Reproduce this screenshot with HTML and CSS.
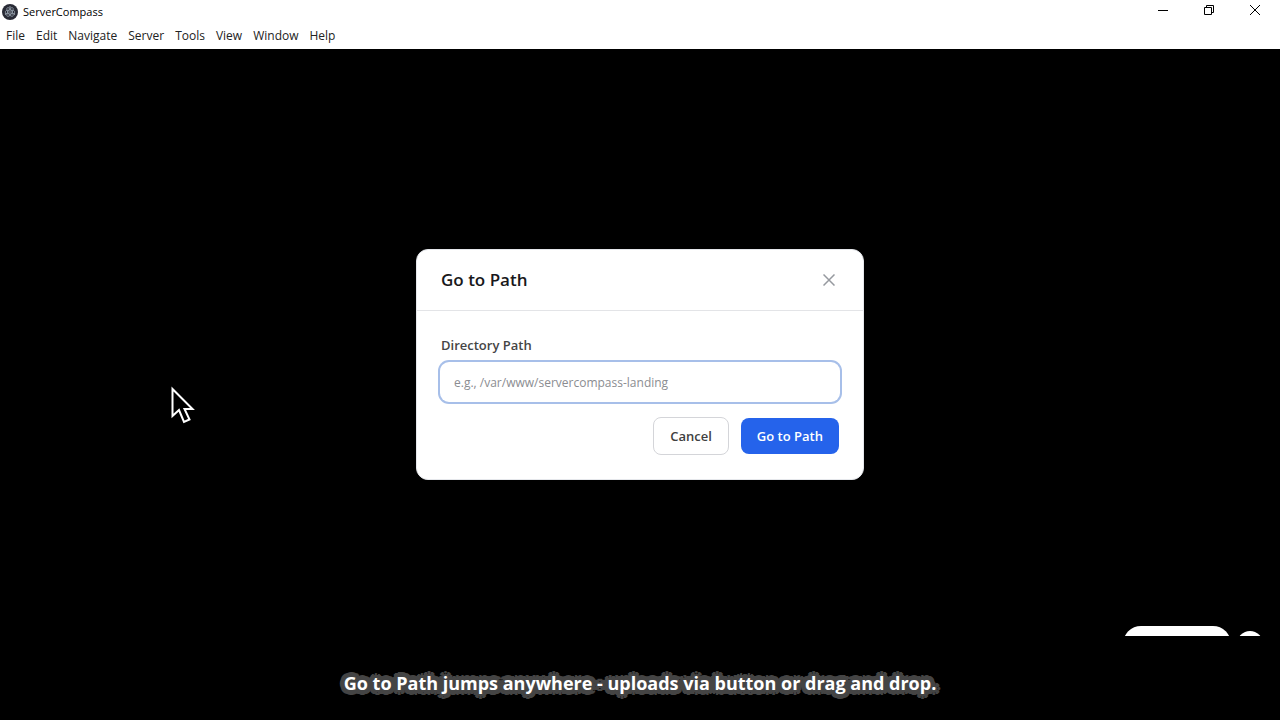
FILE: index.html
```html
<!DOCTYPE html>
<html lang="en">
<head>
<meta charset="utf-8">
<meta name="viewport" content="width=device-width, initial-scale=1">
<title>ServerCompass</title>
<link rel="stylesheet" href="styles.css">
</head>
<body>
<header class="window-chrome">
  <div class="title-bar">
    <svg class="app-icon" viewBox="0 0 16 16" aria-hidden="true">
      <circle cx="8" cy="8" r="8" fill="#292b36"/>
      <g fill="none" stroke="#a4b0bd" stroke-width=".65">
        <ellipse cx="8" cy="8" rx="5" ry="2"/>
        <ellipse cx="8" cy="8" rx="5" ry="2" transform="rotate(60 8 8)"/>
        <ellipse cx="8" cy="8" rx="5" ry="2" transform="rotate(120 8 8)"/>
      </g>
      <g fill="#b8c2cc"><circle cx="8" cy="8" r=".7"/><circle cx="3.5" cy="10" r=".7"/><circle cx="12.5" cy="10" r=".7"/><circle cx="8" cy="3" r=".7"/></g>
    </svg>
    <span class="app-name">ServerCompass</span>
    <div class="window-controls">
      <button class="window-button" type="button" aria-label="Minimize"><svg viewBox="0 0 12 12"><path d="M1 6.5h10"/></svg></button>
      <button class="window-button" type="button" aria-label="Restore"><svg viewBox="0 0 12 12"><path d="M1.5 3.5h7v7h-7zM3.500 3.500v-2h7v7h-2"/></svg></button>
      <button class="window-button" type="button" aria-label="Close window"><svg viewBox="0 0 12 12"><path d="M1 1l10 10M11 1L1 11"/></svg></button>
    </div>
  </div>
  <nav class="menu-bar">
    <button class="menu-item" type="button">File</button>
    <button class="menu-item" type="button">Edit</button>
    <button class="menu-item" type="button">Navigate</button>
    <button class="menu-item" type="button">Server</button>
    <button class="menu-item" type="button">Tools</button>
    <button class="menu-item" type="button">View</button>
    <button class="menu-item" type="button">Window</button>
    <button class="menu-item" type="button">Help</button>
  </nav>
</header>
<main class="workspace">
  <form class="dialog" role="dialog" aria-labelledby="dialog-title">
    <div class="dialog-header">
      <h1 class="dialog-title" id="dialog-title">Go to Path</h1>
      <button class="dialog-close" type="button" aria-label="Close"><svg viewBox="0 0 12 12"><path d="M.5.5l11 11M11.500.5l-11 11"/></svg></button>
    </div>
    <div class="dialog-body">
      <label class="field-label" for="path">Directory Path</label>
      <input class="field-input" id="path" type="text" placeholder="e.g., /var/www/servercompass-landing">
      <div class="dialog-actions">
        <button class="button button-secondary" type="button">Cancel</button>
        <button class="button button-primary" type="button">Go to Path</button>
      </div>
    </div>
  </form>
  <div class="floating-controls">
    <span class="floating-pill"></span>
    <span class="floating-dot"></span>
  </div>
</main>
<footer class="caption-bar"><p class="caption">Go to Path jumps anywhere - uploads via button or drag and drop.</p></footer>
<svg class="pointer" viewBox="0 0 26 38" aria-hidden="true"><path d="M2.500 3v27l6.500-6 5 12 5.500-2.500-5-10.500h8z" fill="#000" stroke="#fff" stroke-width="2"/></svg>
</body>
</html>
```
FILE: styles.css
```css
* { box-sizing: border-box; }

body {
  display: flex;
  flex-direction: column;
  min-height: 100vh;
  margin: 0;
  background: #000;
  font-family: "Open Sans", "Noto Sans", sans-serif;
}

button, input { font-family: inherit; }

.window-chrome { background: #fff; color: #000; }

.title-bar {
  display: flex;
  align-items: center;
  height: 23px;
  padding-left: 2px;
}

.app-icon { width: 16px; height: 16px; margin-right: 5px; }
.app-name { font-size: 11px; line-height: 16px; }

.window-controls { display: flex; margin-left: auto; padding-right: 2px; }

.window-button {
  display: grid;
  place-items: center;
  width: 46px;
  height: 23px;
  padding: 0 0 3px;
  border: 0;
  background: none;
}

.window-button svg { width: 12px; height: 12px; fill: none; stroke: #000; stroke-width: 1; }

.menu-bar { display: flex; gap: 11px; height: 26px; padding: 0 6px; }

.menu-item {
  padding: 0;
  border: 0;
  background: none;
  color: #222;
  font-size: 12px;
  line-height: 26px;
}

.workspace {
  position: relative;
  display: flex;
  flex: 1;
  align-items: center;
  justify-content: center;
  padding: 44px 16px;
  overflow: hidden;
}

.dialog {
  width: 100%;
  max-width: 448px;
  margin-top: 44px;
  border: 1px solid #e5e7eb;
  border-radius: 12px;
  background: #fff;
}

.dialog-header {
  display: flex;
  align-items: center;
  justify-content: space-between;
  padding: 16px 24px;
  border-bottom: 1px solid #e3e4e7;
}

.dialog-title {
  margin: 0;
  color: #18181b;
  font-size: 17px;
  font-weight: 600;
  line-height: 28px;
}

.dialog-close {
  display: grid;
  place-items: center;
  width: 20px;
  height: 20px;
  padding: 0;
  border: 0;
  background: none;
}

.dialog-close svg { width: 12px; height: 12px; fill: none; stroke: #96999f; stroke-width: 1.5; }

.dialog-body { padding: 24px; }

.field-label {
  display: block;
  margin-bottom: 8px;
  color: #454545;
  font-size: 13px;
  font-weight: 600;
  line-height: 20px;
}

.field-input {
  display: block;
  width: 100%;
  height: 38px;
  padding: 0 13px;
  border: 0;
  border-radius: 8px;
  outline: 0;
  background: #fff;
  box-shadow: 0 0 0 1px #fff, 0 0 0 3px #a7bfe9;
  color: #333;
  font-size: 12px;
}

.field-input::placeholder { color: #8b8d91; opacity: 1; }

.dialog-actions {
  display: flex;
  align-items: center;
  justify-content: flex-end;
  gap: 12px;
  margin-top: 16px;
}

.button {
  height: 36px;
  padding: 0 16px;
  border: 0;
  border-radius: 8px;
  font-size: 13px;
  font-weight: 600;
}

.button-secondary { height: 38px; border: 1px solid #d4d5d9; background: #fff; color: #404040; }
.button-primary { background: #2563eb; color: #fff; }

.floating-controls {
  position: absolute;
  right: 17px;
  bottom: -26px;
  display: flex;
  align-items: center;
  gap: 6px;
}

.floating-pill { width: 108px; height: 36px; border-radius: 18px; background: #fff; }
.floating-dot { width: 26px; height: 26px; border-radius: 50%; background: #fff; }

.caption-bar { display: flex; justify-content: center; min-height: 84px; padding: 34px 16px 24px; }

.caption {
  margin: 0;
  color: #fff;
  font-size: 18px;
  font-weight: 700;
  line-height: 26px;
  text-align: center;
  text-shadow:
    5px 0 #444, 4px 3px #444, 3px 4px #444, 0 5px #444,
    -3px 4px #444, -4px 3px #444, -5px 0 #444, -4px -3px #444,
    -3px -4px #444, 0 -5px #444, 3px -4px #444, 4px -3px #444,
    2px 0 #444, -2px 0 #444, 0 2px #444, 0 -2px #444,
    2px 2px #444, -2px 2px #444, 2px -2px #444, -2px -2px #444;
}

.pointer { position: absolute; top: 386px; left: 170px; width: 26px; height: 38px; pointer-events: none; }
```
